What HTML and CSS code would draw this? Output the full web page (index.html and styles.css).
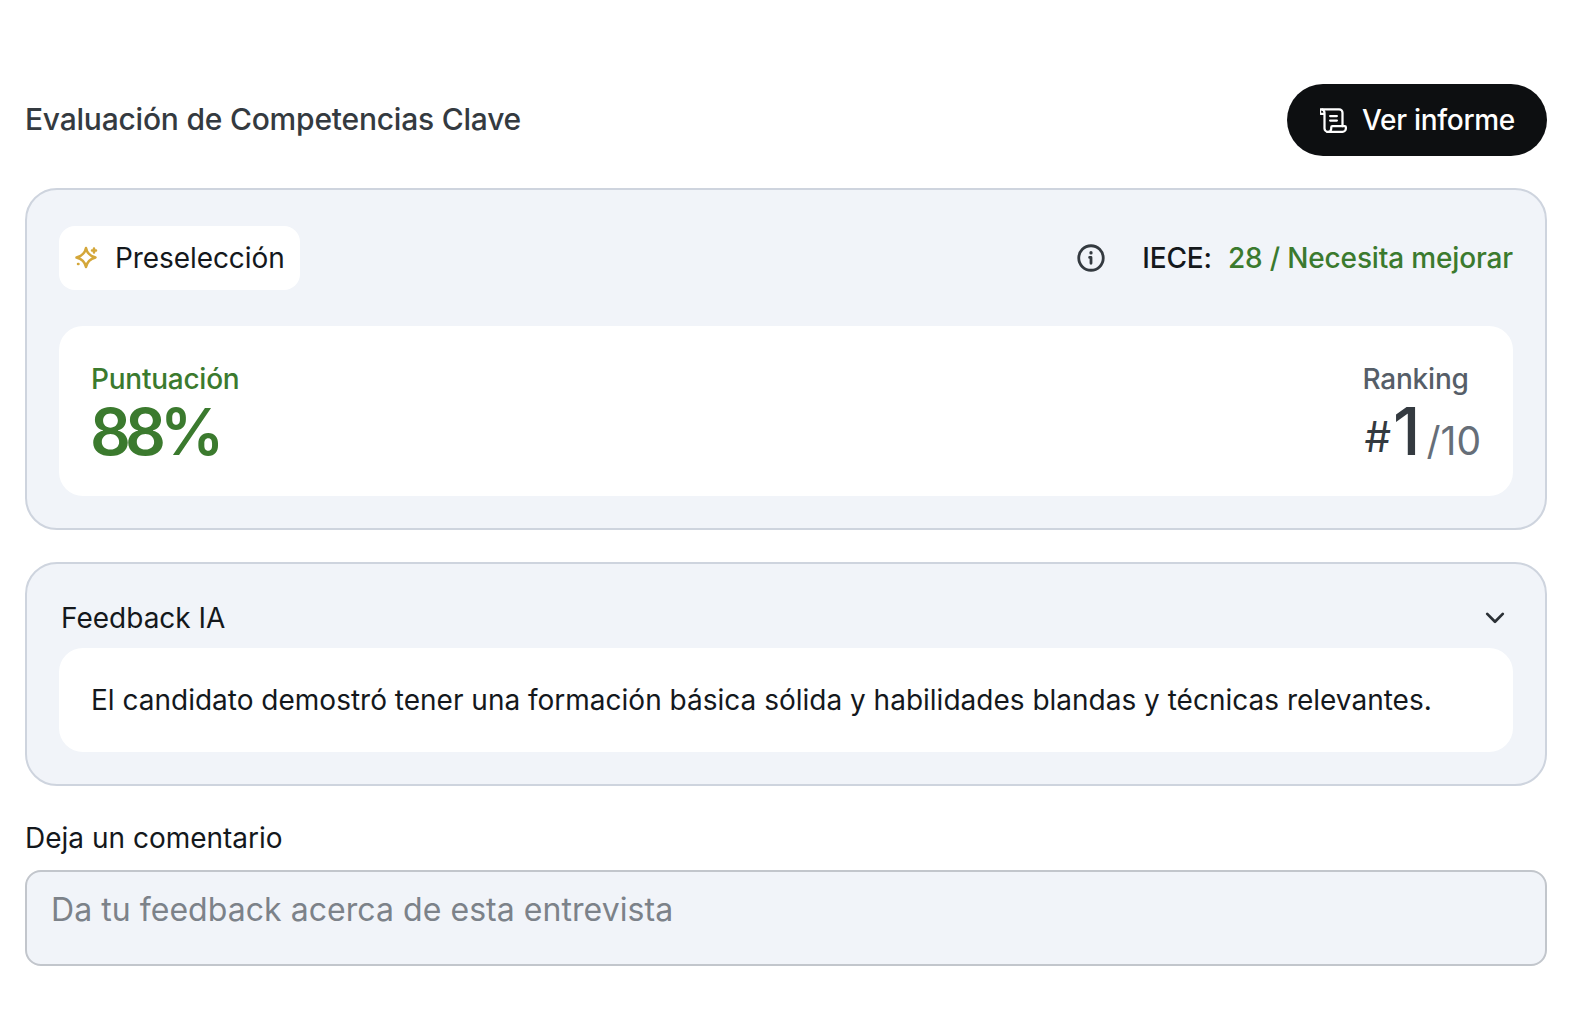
FILE: index.html
```html
<!DOCTYPE html>
<html lang="es">
<head>
    <meta charset="UTF-8">
    <title>Evaluación de Competencias Clave</title>
    <link rel="stylesheet" href="styles.css">
</head>
<body>
    <div class="container">
        <div class="header">
            <h1>Evaluación de Competencias Clave</h1>
            <button class="report-btn">
                <svg class="scroll-icon" viewBox="0 0 24 24" fill="none" stroke="currentColor" stroke-width="2" stroke-linecap="round" stroke-linejoin="round">
                    <path d="M6 22h14a3 3 0 0 0 3-3v-1a1 1 0 0 0-1-1H11a1 1 0 0 0-1 1v1a3 3 0 0 1-3 3 3 3 0 0 1-3-3V5a3 3 0 0 0-3-3 1 1 0 0 0-1 1v2a1 1 0 0 0 1 1h3"/>
                    <path d="M2 2h15a3 3 0 0 1 3 3v12"/>
                    <path d="M9 8h6M9 12h6"/>
                </svg>
                Ver informe
            </button>
        </div>

        <div class="card score-card">
            <div class="score-top">
                <div class="badge">
                    <svg class="sparkle" viewBox="0 0 24 24" fill="none" stroke="currentColor" stroke-width="2.500" stroke-linecap="round" stroke-linejoin="round">
                        <path d="M11 2c1 5 3.800 8 9.500 9.500-5.700 1.500-8.500 4.500-9.500 9.500-1-5-3.800-8-9.500-9.500C7.200 10 10 7 11 2z"/>
                        <path d="M19 2.500v4M17 4.500h4M3 18h.5"/>
                    </svg>
                    Preselección
                </div>
                <div class="iece">
                    <svg class="info-icon" viewBox="0 0 24 24" fill="none" stroke="currentColor" stroke-width="2.400" stroke-linecap="round" stroke-linejoin="round">
                        <circle cx="12" cy="12" r="10.500"/>
                        <path d="M10.800 11.500H12v5"/>
                        <path d="M12 7.500v.2" stroke-width="2.800"/>
                    </svg>
                    <span class="iece-label">IECE:</span>
                    <span class="iece-value">28 / Necesita mejorar</span>
                </div>
            </div>
            <div class="panel score-panel">
                <div class="score">
                    <div class="score-label">Puntuación</div>
                    <div class="score-value">88%</div>
                </div>
                <div class="ranking">
                    <div class="ranking-label">Ranking</div>
                    <div class="ranking-value"><span class="hash">#</span><span class="pos">1</span><span class="total">/10</span></div>
                </div>
            </div>
        </div>

        <div class="card feedback-card">
            <div class="feedback-head">
                <span>Feedback IA</span>
                <svg class="chevron" viewBox="0 0 24 24" fill="none" stroke="currentColor" stroke-width="3" stroke-linecap="round" stroke-linejoin="round">
                    <path d="M3.500 7.500 12 16l8.500-8.500"/>
                </svg>
            </div>
            <div class="panel feedback-text">El candidato demostró tener una formación básica sólida y habilidades blandas y técnicas relevantes.</div>
        </div>

        <label class="comment-label" for="comment">Deja un comentario</label>
        <textarea id="comment" class="comment" placeholder="Da tu feedback acerca de esta entrevista"></textarea>
    </div>
</body>
</html>
```

FILE: styles.css
```css
* {
    box-sizing: border-box;
}
body {
    margin: 0;
    background-color: #fff;
    color: #14181c;
    font-family: Inter, "Noto Sans", sans-serif;
}
.container {
    display: flex;
    flex-direction: column;
    padding: 84px 47px 0 25px;
}
.header {
    display: flex;
    justify-content: space-between;
    align-items: center;
    margin-bottom: 32px;
}
h1 {
    margin: 0 0 2px;
    color: #343a40;
    font-size: 30px;
    font-weight: 500;
    letter-spacing: -0.22px;
}
.report-btn {
    display: flex;
    align-items: center;
    gap: 15px;
    height: 72px;
    padding: 0 32px 0 33px;
    background-color: #0d0f11;
    border: none;
    border-radius: 36px;
    color: #fff;
    font-family: inherit;
    font-size: 28px;
    font-weight: 500;
    letter-spacing: -0.3px;
}
.scroll-icon {
    width: 27px;
    height: 27px;
}
.card {
    background-color: #f1f4f9;
    border: 2px solid #ced4de;
    border-radius: 32px;
    padding: 32px;
}
.score-card {
    height: 342px;
    padding-top: 36px;
    margin-bottom: 32px;
}
.score-top {
    display: flex;
    justify-content: space-between;
    align-items: center;
    margin-bottom: 36px;
}
.badge {
    display: flex;
    align-items: center;
    gap: 16px;
    height: 64px;
    padding: 0 15px 0 16px;
    background-color: #fff;
    border-radius: 16px;
    font-size: 28px;
    letter-spacing: -0.08px;
}
.sparkle {
    width: 24px;
    height: 24px;
    color: #d4a73a;
}
.iece {
    display: flex;
    align-items: center;
    font-size: 28px;
    font-weight: 500;
    letter-spacing: -0.15px;
}
.info-icon {
    width: 28px;
    height: 28px;
    margin-right: 37px;
    color: #343a40;
}
.iece-value {
    margin-left: 16px;
    color: #3b7a2e;
}
.panel {
    background-color: #fff;
    border-radius: 24px;
}
.score-panel {
    display: flex;
    justify-content: space-between;
    height: 170px;
    padding: 36px 32px 0;
}
.score-label {
    color: #3b7a2e;
    font-size: 28px;
    font-weight: 500;
    letter-spacing: -0.25px;
}
.score-value {
    margin: 4px 0 0 -1px;
    color: #3b7a2e;
    font-size: 64px;
    font-weight: 600;
    line-height: 64px;
    letter-spacing: -6px;
}
.ranking-label {
    color: #565e68;
    font-size: 28px;
    font-weight: 500;
    letter-spacing: -0.2px;
}
.ranking-value {
    margin-top: 4px;
    padding-left: 2px;
    color: #343a40;
    line-height: 62px;
}
.hash {
    position: relative;
    top: -3px;
    font-size: 42px;
    font-weight: 400;
}
.pos {
    margin: 0 6px 0 2px;
    font-size: 66px;
    font-weight: 500;
}
.total {
    color: #666e78;
    font-size: 39px;
    font-weight: 400;
}
.feedback-card {
    height: 224px;
    padding-top: 22px;
    margin-bottom: 36px;
}
.feedback-head {
    display: flex;
    justify-content: space-between;
    align-items: center;
    padding: 2px 7px 0 2px;
    height: 62px;
    font-size: 28px;
}
.chevron {
    width: 22px;
    height: 22px;
    color: #2b3036;
}
.feedback-text {
    display: flex;
    align-items: center;
    height: 104px;
    padding: 0 32px;
    font-size: 28px;
}
.comment-label {
    margin-bottom: 15px;
    margin-top: -1px;
    font-size: 28px;
}
.comment {
    height: 96px;
    padding: 18px 24px;
    background-color: #f1f4f9;
    border: 2px solid #c2c6cc;
    border-radius: 16px;
    color: #14181c;
    font-family: inherit;
    font-size: 32px;
    letter-spacing: 0.05px;
    resize: none;
    outline: none;
}
.comment::placeholder {
    color: #7c8289;
    opacity: 1;
}
```
